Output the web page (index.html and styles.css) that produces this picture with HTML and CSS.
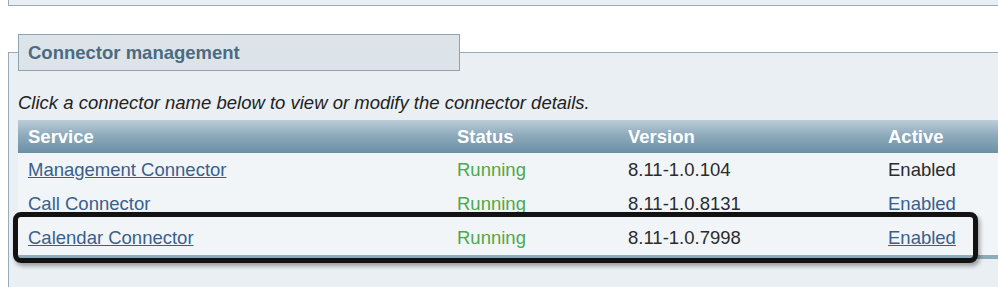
FILE: index.html
```html
<!DOCTYPE html>
<html>
<head>
<meta charset="utf-8">
<link rel="stylesheet" href="styles.css">
</head>
<body>
<div class="page">
  <div class="top-panel"></div>
  <fieldset class="panel">
    <legend class="panel-title">Connector management</legend>
    <p class="intro">Click a connector name below to view or modify the connector details.</p>
    <div class="table-wrap">
      <table class="grid">
        <thead>
          <tr>
            <th class="c-service">Service</th>
            <th class="c-status">Status</th>
            <th class="c-version">Version</th>
            <th class="c-active">Active</th>
          </tr>
        </thead>
        <tbody>
          <tr>
            <td><a class="link u" href="#">Management Connector</a></td>
            <td class="running">Running</td>
            <td class="ver">8.11-1.0.104</td>
            <td class="plain">Enabled</td>
          </tr>
          <tr>
            <td><a class="link" href="#">Call Connector</a></td>
            <td class="running">Running</td>
            <td class="ver">8.11-1.0.8131</td>
            <td><a class="link" href="#">Enabled</a></td>
          </tr>
          <tr>
            <td><a class="link u" href="#">Calendar Connector</a></td>
            <td class="running">Running</td>
            <td class="ver">8.11-1.0.7998</td>
            <td><a class="link u" href="#">Enabled</a></td>
          </tr>
        </tbody>
      </table>
      <div class="highlight"></div>
    </div>
  </fieldset>
</div>
</body>
</html>
```

FILE: styles.css
```css
html, body {
  margin: 0;
  padding: 0;
  background: #ffffff;
  overflow: hidden;
}
body {
  font-family: "Liberation Sans", Arial, sans-serif;
  width: 998px;
  height: 287px;
}
.page {
  width: 998px;
}
.top-panel {
  margin-left: 8px;
  height: 5px;
  background: #e9eef2;
  border-left: 1px solid #9aabb8;
  border-bottom: 1px solid #9aabb8;
}
.panel {
  margin: 28px 0 0 8px;
  padding: 0 0 40px 9px;
  border: 1px solid #9aabb8;
  border-right: none;
  border-bottom: none;
  background: #eaeff3;
  min-inline-size: 0;
}
.panel-title {
  box-sizing: border-box;
  width: 442px;
  height: 37px;
  padding: 0 0 0 9px;
  margin: 0;
  background: #dce4ea;
  border: 1px solid #8ea3b2;
  color: #4b6b80;
  font-weight: bold;
  font-size: 18.5px;
  line-height: 35px;
}
.intro {
  margin: 22px 0 0 0;
  font-style: italic;
  font-size: 18.5px;
  line-height: 20px;
  color: #222222;
}
.table-wrap {
  position: relative;
  margin-top: 7px;
}
.grid {
  border-collapse: collapse;
  width: 100%;
  background: #f2f5f8;
  border-bottom: 4px solid #8eabbb;
  font-size: 18.5px;
}
.grid th {
  height: 33px;
  padding: 0 0 0 10px;
  text-align: left;
  color: #ffffff;
  font-weight: bold;
  background: linear-gradient(to bottom, #bccdd8 0%, #8eabbc 45%, #6c90a5 100%);
}
.grid td {
  height: 34px;
  padding: 0 0 0 10px;
  vertical-align: middle;
}
.c-service { width: 419px; }
.c-status { width: 161px; }
.c-version { width: 250px; }
.link {
  color: #38608c;
  text-decoration: none;
}
.link.u {
  text-decoration: underline;
}
.running { color: #4fa84a; }
.ver, .plain { color: #2b2b2b; }
.highlight {
  position: absolute;
  left: -5px;
  top: 92px;
  width: 955px;
  height: 41px;
  border: 5px solid #121212;
  border-radius: 8px;
  box-shadow: 2px 3px 4px rgba(0, 0, 0, 0.35);
}
```
